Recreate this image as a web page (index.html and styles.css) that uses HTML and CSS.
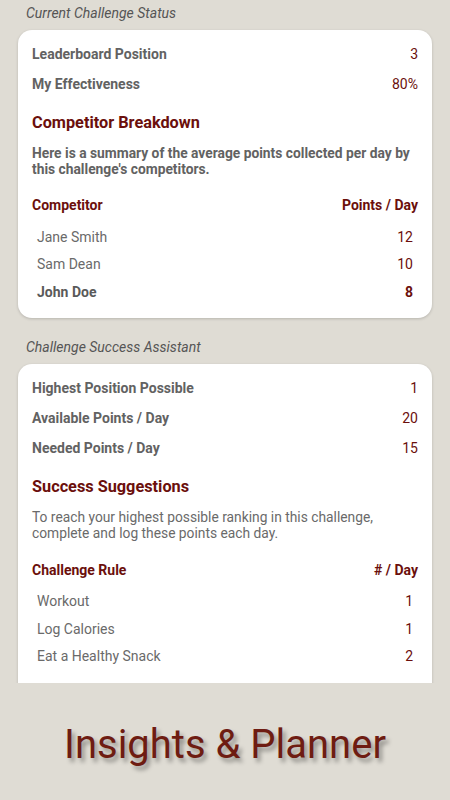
FILE: index.html
```html
<!DOCTYPE html>
<html lang="en">
<head>
  <meta charset="UTF-8">
  <meta name="viewport" content="width=device-width, initial-scale=1.0">
  <title>Insights &amp; Planner</title>
  <link rel="stylesheet" href="styles.css">
</head>
<body>
  <div class="screen">
    <div class="content">
      <div class="section-label">Current Challenge Status</div>
      <div class="card">
        <div class="stat-row">
          <span class="stat-name">Leaderboard Position</span>
          <span class="stat-value">3</span>
        </div>
        <div class="stat-row">
          <span class="stat-name">My Effectiveness</span>
          <span class="stat-value">80%</span>
        </div>
        <h2>Competitor Breakdown</h2>
        <p class="desc bold">Here is a summary of the average points collected per day by this challenge's competitors.</p>
        <div class="table-head">
          <span>Competitor</span>
          <span>Points / Day</span>
        </div>
        <div class="table-row">
          <span>Jane Smith</span>
          <span class="num">12</span>
        </div>
        <div class="table-row">
          <span>Sam Dean</span>
          <span class="num">10</span>
        </div>
        <div class="table-row me">
          <span>John Doe</span>
          <span class="num">8</span>
        </div>
      </div>

      <div class="section-label">Challenge Success Assistant</div>
      <div class="card">
        <div class="stat-row">
          <span class="stat-name">Highest Position Possible</span>
          <span class="stat-value">1</span>
        </div>
        <div class="stat-row">
          <span class="stat-name">Available Points / Day</span>
          <span class="stat-value">20</span>
        </div>
        <div class="stat-row">
          <span class="stat-name">Needed Points / Day</span>
          <span class="stat-value">15</span>
        </div>
        <h2>Success Suggestions</h2>
        <p class="desc">To reach your highest possible ranking in this challenge, complete and log these points each day.</p>
        <div class="table-head">
          <span>Challenge Rule</span>
          <span># / Day</span>
        </div>
        <div class="table-row">
          <span>Workout</span>
          <span class="num">1</span>
        </div>
        <div class="table-row">
          <span>Log Calories</span>
          <span class="num">1</span>
        </div>
        <div class="table-row">
          <span>Eat a Healthy Snack</span>
          <span class="num">2</span>
        </div>
      </div>
    </div>

    <div class="caption">Insights &amp; Planner</div>
  </div>
</body>
</html>
```

FILE: styles.css
```css
body {
  margin: 0;
  padding: 0;
  background-color: #dfdcd4;
  font-family: Roboto, "Noto Sans", sans-serif;
}

.screen {
  width: 450px;
  height: 800px;
  display: flex;
  flex-direction: column;
}

/* scroll area: the last card runs past its bottom edge */
.content {
  height: 683px;
  overflow: hidden;
  padding: 0 18px;
}

.section-label {
  padding: 3px 8px 7px;
  line-height: 20px;
  font-size: 14px;
  font-style: italic;
  color: #555;
}

.card {
  background-color: white;
  border-radius: 14px;
  padding: 9px 14px 12px;
  margin-bottom: 16px;
  box-shadow: 0 1px 3px rgba(0, 0, 0, 0.18);
}

.content .card:last-child {
  padding-bottom: 40px;
}

.stat-row {
  display: flex;
  justify-content: space-between;
  align-items: center;
  height: 30px;
  font-size: 14px;
}

.stat-name {
  font-weight: bold;
  color: #626262;
}

.stat-value {
  color: #6b0f0c;
}

h2 {
  margin: 12px 0 0;
  font-size: 16.3px;
  line-height: 24px;
  color: #6b0f0c;
}

.desc {
  margin: 10px 0 0;
  font-size: 13.8px;
  line-height: 16.5px;
  color: #6a6a6a;
}

.desc.bold {
  line-height: 16px;
  font-weight: bold;
  color: #626262;
}

.table-head {
  display: flex;
  justify-content: space-between;
  margin-top: 18px;
  line-height: 20px;
  font-size: 14px;
  font-weight: bold;
  color: #6b0f0c;
}

.table-head + .table-row {
  margin-top: 8px;
}

.table-row {
  display: flex;
  justify-content: space-between;
  align-items: center;
  height: 27.5px;
  padding: 0 5px;
  font-size: 14px;
  color: #6a6a6a;
}

.table-row .num {
  color: #6b0f0c;
}

.table-row.me {
  font-weight: bold;
  color: #5a5a5a;
}

.caption {
  flex: 1;
  display: flex;
  justify-content: center;
  align-items: center;
  padding-top: 6px;
  font-size: 40px;
  color: #6e1c12;
  text-shadow: 3px 4px 4px rgba(0, 0, 0, 0.35);
}
```
